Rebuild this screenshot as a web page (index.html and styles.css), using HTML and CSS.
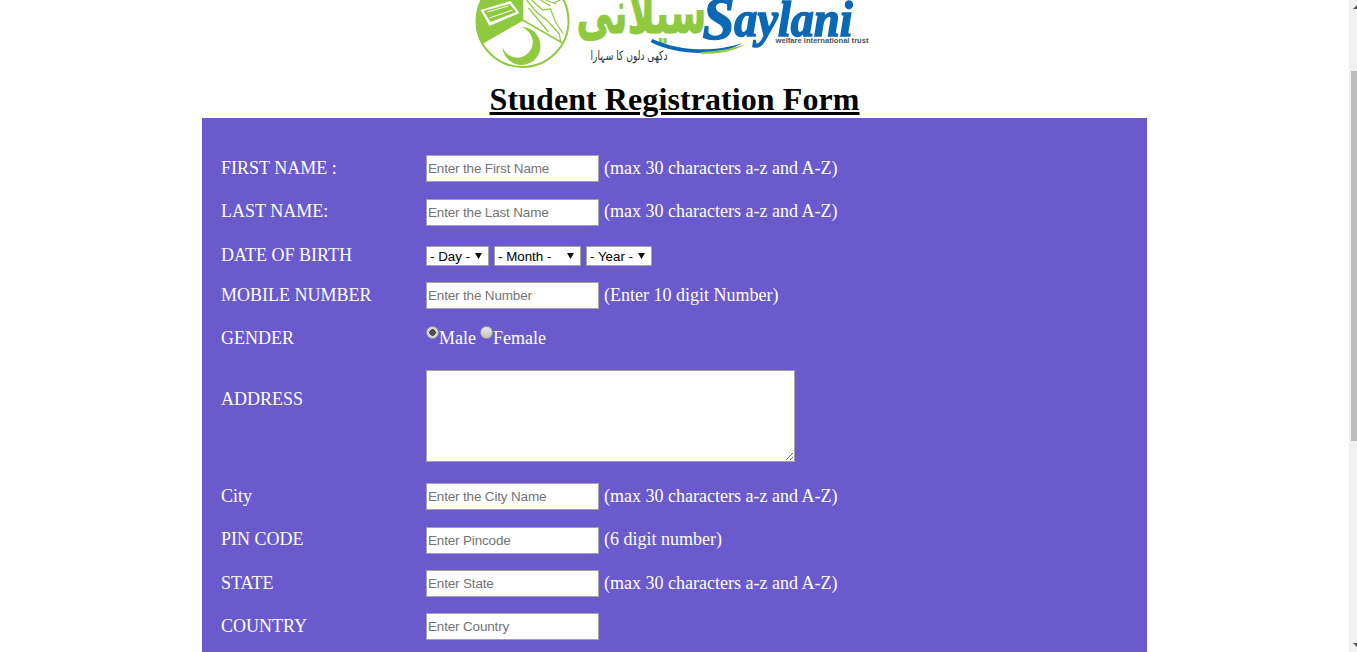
FILE: index.html
```html
<!DOCTYPE html>
<html lang="en">
<head>
<meta charset="utf-8">
<title>Student Registration Form</title>
<link rel="stylesheet" href="styles.css">
</head>
<body>
<main class="page">
  <header class="masthead">
    <svg class="logo" viewBox="474.5 0 400 82" width="400" height="82" role="img" aria-label="Saylani welfare international trust">
      <circle cx="522" cy="21" r="46" fill="#fff" stroke="#8fc93f" stroke-width="2"/>
      <path d="M522 20 L522 -25 A46 46 0 0 0 482 43 Z" fill="#8fc93f"/>
      <path d="M522 20 L482 43 M522 20 L562 43 M522 -25 L522 20" stroke="#8fc93f" stroke-width="1.5" fill="none"/>
      <path d="M480 10 L510 1 L519 13 L489 26 Z" fill="#fff"/>
      <path d="M483 11 L509 4 L516 12 L490 22 Z" fill="#8fc93f"/>
      <path d="M487 12 L508 6 M489 18 L512 10" stroke="#fff" stroke-width="1" fill="none"/>
      <path d="M526 0 L536 12 L547 21 L559 34 L560 42 M531 0 L542 10 L550 9 L555 22 L563 34 M540 0 L550 6 M545 0 L556 4 M528 8 L538 20 L548 32 M553 3 L560 0" stroke="#8fc93f" stroke-width="1.2" fill="none"/>
      <path d="M520 27 A19 19 0 1 1 502 47 A15.500 15.500 0 1 0 520 27 Z" fill="#8fc93f"/>
      <text class="logo-urdu" x="576" y="33" textLength="130" lengthAdjust="spacingAndGlyphs">&#x633;&#x6CC;&#x644;&#x627;&#x646;&#x6CC;</text>
      <path d="M652 39 C680 52 715 52 742 43 C722 56 680 57 650 42 Z" fill="#0a68b5"/>
      <path d="M700 52 C720 51 735 48 745 44 C735 51 718 54 700 54 Z" fill="#8fc93f"/>
      <text class="logo-name" x="702" y="36" textLength="150" lengthAdjust="spacingAndGlyphs"><tspan class="logo-cap" dy="3">S</tspan><tspan dy="-3">aylani</tspan></text>
      <text class="logo-trust" x="775" y="43" textLength="93" lengthAdjust="spacingAndGlyphs">welfare international trust</text>
      <text class="logo-motto" x="590" y="60" textLength="77" lengthAdjust="spacingAndGlyphs">&#x62F;&#x6A9;&#x6BE;&#x6CC; &#x62F;&#x644;&#x648;&#x6BA; &#x6A9;&#x627; &#x633;&#x6C1;&#x627;&#x631;&#x627;</text>
    </svg>
    <h1 class="title">Student Registration Form</h1>
  </header>

  <form class="form">
    <div class="row">
      <label class="label" for="first">FIRST NAME :</label>
      <input class="field" id="first" type="text" placeholder="Enter the First Name">
      <span class="hint">(max 30 characters a-z and A-Z)</span>
    </div>
    <div class="row row-before-date row-raised">
      <label class="label" for="last">LAST NAME:</label>
      <input class="field" id="last" type="text" placeholder="Enter the Last Name">
      <span class="hint">(max 30 characters a-z and A-Z)</span>
    </div>
    <div class="row row-date">
      <span class="label label-date">DATE OF BIRTH</span>
      <div class="selects">
        <select class="pick pick-day"><option>- Day -</option></select>
        <select class="pick pick-month"><option>- Month -</option></select>
        <select class="pick pick-year"><option>- Year -</option></select>
      </div>
    </div>
    <div class="row">
      <label class="label" for="mobile">MOBILE NUMBER</label>
      <input class="field" id="mobile" type="text" placeholder="Enter the Number">
      <span class="hint">(Enter 10 digit Number)</span>
    </div>
    <div class="row row-gender">
      <span class="label">GENDER</span>
      <label class="choice"><input class="radio" type="radio" name="gender" checked>Male</label>
      <label class="choice"><input class="radio" type="radio" name="gender">Female</label>
    </div>
    <div class="row row-address">
      <label class="label label-address" for="address">ADDRESS</label>
      <textarea class="area" id="address"></textarea>
    </div>
    <div class="row">
      <label class="label" for="city">City</label>
      <input class="field" id="city" type="text" placeholder="Enter the City Name">
      <span class="hint">(max 30 characters a-z and A-Z)</span>
    </div>
    <div class="row row-tight row-raised">
      <label class="label" for="pin">PIN CODE</label>
      <input class="field" id="pin" type="text" placeholder="Enter Pincode">
      <span class="hint">(6 digit number)</span>
    </div>
    <div class="row row-tight">
      <label class="label" for="state">STATE</label>
      <input class="field" id="state" type="text" placeholder="Enter State">
      <span class="hint">(max 30 characters a-z and A-Z)</span>
    </div>
    <div class="row">
      <label class="label" for="country">COUNTRY</label>
      <input class="field" id="country" type="text" placeholder="Enter Country">
    </div>
  </form>
</main>
<aside class="scrollbar" aria-hidden="true">
  <span class="arrow arrow-up"></span>
  <span class="thumb"></span>
  <span class="arrow arrow-down"></span>
</aside>
</body>
</html>
```
FILE: styles.css
```css
* { box-sizing: border-box; }
html, body { height: 100%; margin: 0; overflow: hidden; background: #fff; }
body { display: flex; font-family: "Liberation Serif", "Times New Roman", serif; }

.page { flex: 1; min-width: 0; height: 652px; overflow: hidden; }
.masthead { display: flex; flex-direction: column; align-items: center; height: 118px; }
.logo { display: block; flex: none; height: 82px; overflow: hidden; }
.logo-urdu { font: bold 60px "DejaVu Sans", sans-serif; fill: #8fc93f; stroke: #8fc93f; stroke-width: 1px; }
.logo-name { font: italic bold 50px "Liberation Serif", serif; fill: #0a68b5; stroke: #0a68b5; stroke-width: 1.6px; }
.logo-cap { font-size: 62px; }
.logo-trust { font: bold 8px "Liberation Sans", sans-serif; fill: #45565f; }
.logo-motto { font: 13px "DejaVu Sans", sans-serif; fill: #333; }
.title {
  margin: 0;
  font-size: 32px;
  line-height: 34px;
  font-weight: bold;
  letter-spacing: 0.08px;
  color: #000;
  text-decoration: underline;
  white-space: nowrap;
}

.form {
  width: 945px;
  margin: 0 auto;
  padding: 37px 19px 40px;
  background: #6a5acd;
  color: #fff;
  font-size: 18px;
}
.row { display: flex; align-items: center; height: 27px; margin-bottom: 17px; }
.row-before-date { margin-bottom: 20px; }
.row-date { height: 20px; margin-bottom: 16px; }
.row-gender { align-items: flex-start; }
.row-address { align-items: flex-start; height: 92px; margin-bottom: 21px; }
.row-tight { margin-bottom: 16px; }
.label { flex: none; width: 205px; line-height: 22px; position: relative; top: -1px; }
.label-date { top: -1px; }
.label-address { margin-top: 18px; top: 0; }
.row-gender .label { margin-top: 1px; top: 0; }
.hint { margin-left: 5px; line-height: 22px; position: relative; top: -1px; white-space: nowrap; }
.row-raised .label, .row-raised .hint { top: -2px; }

.field {
  flex: none;
  width: 173px;
  height: 27px;
  padding: 1px;
  border: 1px solid #a3a3a3;
  background: #fff;
  font: 13.500px "Liberation Sans", Arial, sans-serif;
  letter-spacing: -0.17px;
  color: #000;
  border-radius: 0;
  outline: none;
}
.field::placeholder { color: #757575; opacity: 1; }

.selects { display: flex; gap: 5px; }
.pick {
  appearance: none;
  height: 20px;
  padding: 0 0 0 3px;
  border: 1px solid #a3a3a3;
  border-radius: 0;
  font: 13.330px "Liberation Sans", Arial, sans-serif;
  color: #000;
  background: #fff url("data:image/svg+xml,%3Csvg xmlns='http://www.w3.org/2000/svg' width='7' height='6'%3E%3Cpath d='M0 0h7L3.500 6z' fill='%23111'/%3E%3C/svg%3E") no-repeat right 6px top 6px;
}
.pick-day { width: 63px; }
.pick-month { width: 87px; }
.pick-year { width: 66px; }

.choice { display: flex; align-items: flex-start; line-height: 22px; padding-top: 1px; margin-right: 4px; }
.radio {
  appearance: none;
  flex: none;
  width: 13px;
  height: 13px;
  margin: -1px 0 0;
  border: 1px solid #9a9a9a;
  border-radius: 50%;
  background: linear-gradient(#e8e8e8, #c4c4c4);
}
.radio:checked { background: radial-gradient(circle, #4d4d4d 0 3px, #d6d6d6 3.500px); }

.area {
  flex: none;
  display: block;
  width: 369px;
  height: 92px;
  border: 1px solid #a3a3a3;
  background: #fff;
  border-radius: 0;
  outline: none;
}

.scrollbar { flex: none; width: 8px; height: 652px; position: relative; background: #f0f0f0; }
.thumb { position: absolute; top: 71px; left: 2px; width: 6px; height: 370px; background: #bcbcbc; }
.arrow { position: absolute; left: 4px; width: 0; height: 0; border-left: 4px solid transparent; border-right: 4px solid transparent; }
.arrow-up { top: 5px; border-bottom: 4px solid #505050; }
.arrow-down { bottom: 5px; border-top: 4px solid #505050; }
```
